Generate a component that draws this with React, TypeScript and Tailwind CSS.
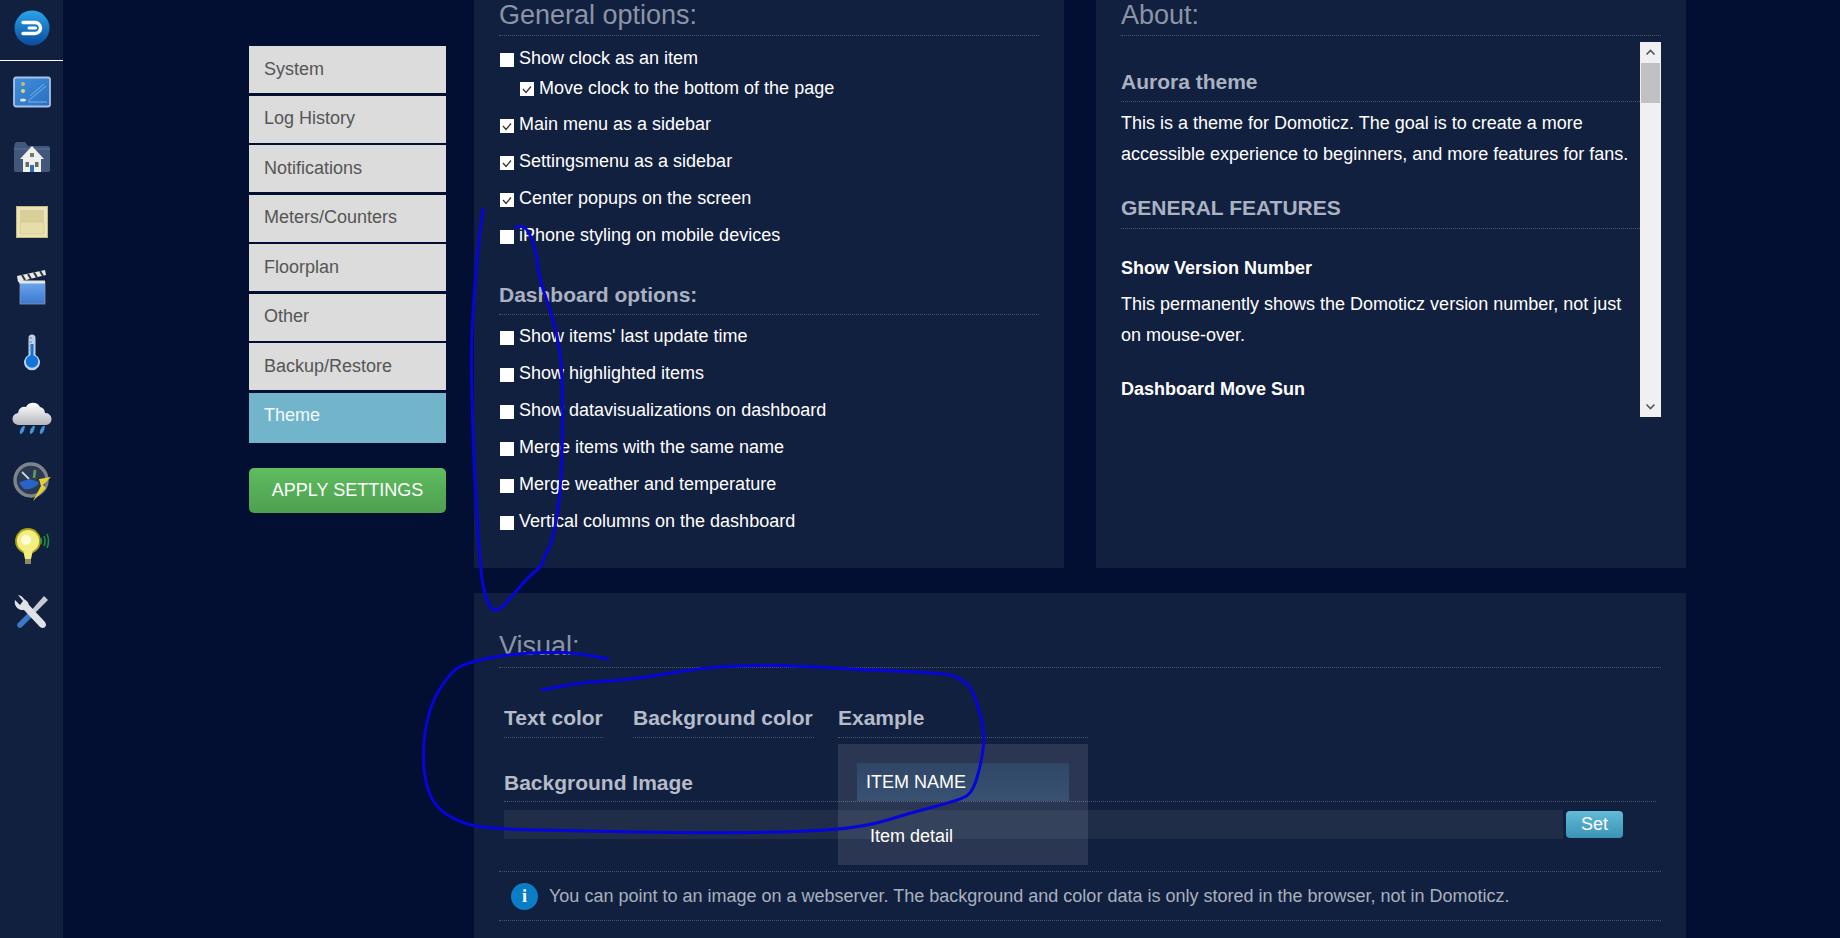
const navItems = ['System', 'Log History', 'Notifications', 'Meters/Counters', 'Floorplan', 'Other', 'Backup/Restore']

const dashboardOptions = [
  "Show items' last update time",
  'Show highlighted items',
  'Show datavisualizations on dashboard',
  'Merge items with the same name',
  'Merge weather and temperature',
  'Vertical columns on the dashboard',
]

// hand drawn marker lines on top of the page, in page pixels
const scribbleOne = [
  [483, 209], [479, 237], [475, 283], [471, 343], [472, 400], [474, 467], [480, 567], [485, 597], [493, 612], [503, 607],
  [528, 577], [541, 567], [545, 555], [552, 543], [560, 500], [563, 433], [562, 367], [557, 333], [548, 303], [539, 278],
  [536, 250], [528, 230], [522, 226], [516, 227],
]
const scribbleTwo = [
  [608, 659], [580, 653], [543, 652], [503, 655], [467, 663], [453, 670], [433, 698], [423, 737], [424, 780], [435, 807],
  [460, 823], [493, 829], [577, 831], [700, 833], [800, 832], [865, 827], [910, 813], [960, 800], [973, 792], [982, 760],
  [985, 730], [973, 690], [963, 680], [947, 673], [867, 670], [800, 666], [750, 665], [700, 668], [630, 680], [583, 682],
  [542, 690],
]

function smooth(points: number[][]) {
  let d = `M${points[0][0]} ${points[0][1]}`
  for (let i = 1; i < points.length - 1; i++) {
    const mx = (points[i][0] + points[i + 1][0]) / 2
    const my = (points[i][1] + points[i + 1][1]) / 2
    d += ` Q${points[i][0]} ${points[i][1]} ${mx} ${my}`
  }
  const last = points[points.length - 1]
  return `${d} L${last[0]} ${last[1]}`
}

function Logo() {
  return (
    <svg width="40" height="40" viewBox="0 0 40 40">
      <defs>
        <linearGradient id="logoFill" x1="0" y1="0" x2="0" y2="1">
          <stop offset="0" stopColor="#2aa5ea" />
          <stop offset="1" stopColor="#0a4a9c" />
        </linearGradient>
      </defs>
      <circle cx="20" cy="20" r="17.5" fill="url(#logoFill)" />
      <path d="M11 14.5 H23 A5.5 5.5 0 0 1 23 25.5 H11" fill="none" stroke="#fff" strokeWidth="3.4" strokeLinecap="round" />
      <path d="M17 20 H23.5" stroke="#fff" strokeWidth="3" strokeLinecap="round" />
    </svg>
  )
}

function DashboardIcon() {
  return (
    <svg width="40" height="40" viewBox="0 0 40 40">
      <defs>
        <linearGradient id="dashFill" x1="0" y1="0" x2="1" y2="1">
          <stop offset="0" stopColor="#3f8fdc" />
          <stop offset="1" stopColor="#2a70c0" />
        </linearGradient>
      </defs>
      <rect x="2" y="5.5" width="36" height="29" rx="2" fill="url(#dashFill)" stroke="#a9c1e6" strokeWidth="1.8" />
      <circle cx="11" cy="12" r="2" fill="#c9b878" />
      <circle cx="11" cy="19" r="2" fill="#ead85e" />
      <ellipse cx="11" cy="28" rx="3" ry="1.6" fill="#dfe8f5" />
      <path d="M16 29 L34 14 M18 24 L32 12 M16 30 H35" stroke="#7ab2ea" strokeWidth="1" />
    </svg>
  )
}

function FolderHouseIcon() {
  return (
    <svg width="40" height="40" viewBox="0 0 40 40">
      <path d="M2 12 Q2 5 5 5 H13 L16 9 H36 Q38 9 38 12 V33 Q38 35 36 35 H4 Q2 35 2 33 Z" fill="#41587c" />
      <path d="M2 12 H38" stroke="#5a7299" strokeWidth="1" />
      <path d="M20 9 L32 22 H29 V35 H11 V22 H8 Z" fill="#eef0ee" />
      <rect x="13.5" y="25" width="3.5" height="5" fill="#6a6a60" />
      <rect x="23" y="25" width="3.5" height="5" fill="#6a6a60" />
      <rect x="18" y="16" width="4" height="4" fill="#77776c" />
      <rect x="18" y="28" width="4" height="7" fill="#2d6fc0" />
    </svg>
  )
}

function FloorplanIcon() {
  return (
    <svg width="40" height="40" viewBox="0 0 40 40">
      <rect x="4.5" y="4.5" width="31" height="31" fill="#ece4b8" stroke="#c2b67c" strokeWidth="1" />
      <rect x="8" y="8" width="24" height="12" fill="#d9cf98" />
      <rect x="8" y="20" width="24" height="12" fill="#e6ddaa" stroke="#cfc48a" strokeWidth="0.6" />
    </svg>
  )
}

function SceneIcon() {
  return (
    <svg width="40" height="40" viewBox="0 0 40 40">
      <defs>
        <linearGradient id="sceneFill" x1="0" y1="0" x2="0" y2="1">
          <stop offset="0" stopColor="#6ba6f2" />
          <stop offset="1" stopColor="#3c78cc" />
        </linearGradient>
      </defs>
      <rect x="8" y="15" width="25" height="22" fill="url(#sceneFill)" stroke="#8a95a6" strokeWidth="0.8" />
      <path d="M5 9 L33 3 L34 8 L6 15 Z" fill="#e8e8e8" />
      <path d="M10 8 L13 13 M16 7 L19 12 M22 5.5 L25 10.5 M28 4 L31 9" stroke="#2c3340" strokeWidth="2" />
      <rect x="7" y="13.5" width="26" height="3" fill="#e4e4e4" />
    </svg>
  )
}

function ThermometerIcon() {
  return (
    <svg width="40" height="40" viewBox="0 0 40 40">
      <path d="M16.5 6 A3.5 3.5 0 0 1 23.5 6 V23 A8 8 0 1 1 16.5 23 Z" fill="#bcd0e8" />
      <circle cx="20" cy="29.5" r="6.2" fill="#1274d8" />
      <rect x="18.5" y="12" width="3" height="16" fill="#1274d8" />
      <path d="M17.5 6 H20 M17.5 10 H20 M17.5 14 H20 M17.5 18 H20" stroke="#6f8098" strokeWidth="1" />
    </svg>
  )
}

function WeatherIcon() {
  return (
    <svg width="40" height="40" viewBox="0 0 40 40">
      <defs>
        <linearGradient id="cloudFill" x1="0" y1="0" x2="0" y2="1">
          <stop offset="0" stopColor="#ffffff" />
          <stop offset="1" stopColor="#b4b8bc" />
        </linearGradient>
      </defs>
      <path d="M7 28 A6 6 0 0 1 6 16 A6.5 6.5 0 0 1 14 10 A8 8 0 0 1 28 10 A6.5 6.5 0 0 1 33 16 A6 6 0 0 1 34 28 Z" fill="url(#cloudFill)" />
      <path d="M11 29 Q7 33 8 37 Q12 37 13 29 Z M21 29 Q17 33 18 37 Q22 37 23 29 Z M31 29 Q27 33 28 37 Q32 37 33 29 Z" fill="#3f94dc" />
    </svg>
  )
}

function UtilityIcon() {
  return (
    <svg width="40" height="40" viewBox="0 0 40 40">
      <circle cx="19" cy="18" r="16" fill="#2b3a52" stroke="#7f848c" strokeWidth="3.4" />
      <path d="M10 10 L17 17" stroke="#cfd3d8" strokeWidth="1.8" />
      <path d="M23 8 L22 16" stroke="#5f9d5a" strokeWidth="2.6" />
      <path d="M7 21 Q18 14 27 21 Q22 28 12 27 Z" fill="#2a63c8" />
      <path d="M39 15 L27 17 L29 24 L21 39 L34 26 L31 23 Z" fill="#e4d030" />
    </svg>
  )
}

function LightIcon() {
  return (
    <svg width="40" height="40" viewBox="0 0 40 40">
      <circle cx="16" cy="14" r="12" fill="#f4ee80" stroke="#a8a210" strokeWidth="1.8" />
      <circle cx="14" cy="13" r="5" fill="#fffbd8" />
      <path d="M11 23 L13 32 H19 L21 23 Z" fill="#f2ec80" />
      <rect x="13" y="32" width="6" height="5" fill="#8f8a5c" />
      <path d="M29 11 Q30 14 29 17 M32 9 Q34 14 32 19 M35 7 Q38 14 35 21" fill="none" stroke="#1f8f35" strokeWidth="1.6" />
    </svg>
  )
}

function ToolsIcon() {
  return (
    <svg width="40" height="40" viewBox="0 0 40 40">
      <path d="M32 4 L36 8 L20 24 L17 21 Z" fill="#c6cbd2" />
      <path d="M19 22 L8 33" stroke="#3d78c4" strokeWidth="5.5" strokeLinecap="round" />
      <path d="M12 7 A8 8 0 0 0 6 3 L11 9 L8 13 L3 8 A8 8 0 0 0 12 18 L28 35 Q31 37 33 35 Q35 33 33 30 L17 13 Q16 9 12 7 Z" fill="#dfe2e6" />
    </svg>
  )
}

const sideIcons = [DashboardIcon, FolderHouseIcon, FloorplanIcon, SceneIcon, ThermometerIcon, WeatherIcon, UtilityIcon, LightIcon, ToolsIcon]

function CheckOption({ label, checked, sub }: { label: string; checked?: boolean; sub?: boolean }) {
  return (
    <label className={`ml-[1px] flex items-center gap-[5px] text-[18px] text-white ${sub ? 'h-[29px] pb-[7px] pl-[20px]' : 'h-[37px]'}`}>
      <span className="mt-[2px] flex h-[14px] w-[14px] shrink-0 items-center justify-center bg-white">
        {checked && (
          <svg width="12" height="12" viewBox="0 0 12 12" fill="none" stroke="#333" strokeWidth="1.3">
            <path d="M2 6 L5 9.5 L10 3.5" />
          </svg>
        )}
      </span>
      {label}
    </label>
  )
}

function Scrollbar() {
  return (
    <div className="flex w-[21px] shrink-0 flex-col bg-[#f0f0f0]">
      <div className="flex h-[21px] items-center justify-center">
        <svg width="11" height="11" viewBox="0 0 11 11" fill="none" stroke="#555" strokeWidth="1.6">
          <path d="M1.5 7.5 L5.5 3.5 L9.5 7.5" />
        </svg>
      </div>
      <div className="mx-px h-[40px] bg-[#c1c1c1]" />
      <div className="flex-1" />
      <div className="flex h-[21px] items-center justify-center">
        <svg width="11" height="11" viewBox="0 0 11 11" fill="none" stroke="#555" strokeWidth="1.6">
          <path d="M1.5 3.5 L5.5 7.5 L9.5 3.5" />
        </svg>
      </div>
    </div>
  )
}

export default function App() {
  return (
    <div className="relative flex h-[938px] w-[1840px] overflow-hidden bg-[#020f33] font-['Liberation_Sans',Arial,sans-serif]">
      {/* Main menu */}
      <div className="flex w-[63px] shrink-0 flex-col items-center bg-[#11203f]">
        <div className="flex h-[61px] w-full items-center justify-center border-b border-white pb-[5px]">
          <Logo />
        </div>
        <div className="-mt-[2px] flex flex-col">
          {sideIcons.map((Icon, i) => (
            <div key={i} className="flex h-[65px] items-center justify-center">
              <Icon />
            </div>
          ))}
        </div>
      </div>

      {/* Settings menu */}
      <div className="ml-[186px] w-[197px] shrink-0 pt-[46px]">
        <div className="flex flex-col gap-[2.5px]">
          {navItems.map((item) => (
            <div key={item} className="flex h-[47px] items-center bg-[#dcdcdc] pb-[1px] pl-[15px] text-[18px] text-[#555]">
              {item}
            </div>
          ))}
          <div className="flex h-[50px] items-center bg-[#72b4ca] pb-[4px] pl-[15px] text-[18px] text-[#f2fbff]">Theme</div>
        </div>
        <button className="mt-[25px] h-[45px] w-full rounded-[5px] bg-gradient-to-b from-[#5fbd5f] to-[#4d9f50] text-[18px] text-white">
          APPLY SETTINGS
        </button>
      </div>

      <div className="ml-[28px] w-[1212px] shrink-0">
        <div className="flex h-[568px] gap-[32px]">
          {/* General options */}
          <section className="w-[590px] bg-[#12203f] px-[25px]">
            <h2 className="h-[36px] border-b border-dotted border-[#4a556c] text-[27px] leading-[30px] text-[#8b94a6]">General options:</h2>
            <div className="mt-[4px]">
              <CheckOption label="Show clock as an item" />
              <CheckOption label="Move clock to the bottom of the page" checked sub />
              <CheckOption label="Main menu as a sidebar" checked />
              <CheckOption label="Settingsmenu as a sidebar" checked />
              <CheckOption label="Center popups on the screen" checked />
              <CheckOption label="iPhone styling on mobile devices" />
            </div>
            <h3 className="mb-[3px] flex h-[61px] items-end border-b border-dotted border-[#4a556c] pb-[4px] text-[21px] font-bold text-[#aab2c2]">
              Dashboard options:
            </h3>
            {dashboardOptions.map((label) => (
              <CheckOption key={label} label={label} />
            ))}
          </section>

          {/* About */}
          <section className="w-[590px] bg-[#12203f] px-[25px]">
            <h2 className="h-[36px] border-b border-dotted border-[#4a556c] text-[27px] leading-[30px] text-[#8b94a6]">About:</h2>
            <div className="mt-[6px] flex h-[375px]">
              <div className="min-w-0 flex-1 overflow-hidden text-[18px] leading-[31px] text-white">
                <h3 className="flex h-[60px] items-end border-b border-dotted border-[#4a556c] pb-[4px] text-[21px] font-bold text-[#aab2c2]">Aurora theme</h3>
                <p className="mt-[6px]">
                  This is a theme for Domoticz. The goal is to create a more accessible experience to beginners, and more features for fans.
                </p>
                <h3 className="flex h-[59px] items-end border-b border-dotted border-[#4a556c] pb-[5px] text-[21px] font-bold text-[#aab2c2]">GENERAL FEATURES</h3>
                <h4 className="mt-[24px] font-bold">Show Version Number</h4>
                <p className="mt-[5px]">This permanently shows the Domoticz version number, not just on mouse-over.</p>
                <h4 className="mt-[23px] font-bold">Dashboard Move Sun</h4>
              </div>
              <Scrollbar />
            </div>
          </section>
        </div>

        {/* Visual */}
        <section className="relative mt-[25px] h-[400px] bg-[#12203f] px-[25px]">
          <h2 className="flex h-[75px] items-end border-b border-dotted border-[#4a556c] pb-[6px] text-[27px] leading-[30px] text-[#8b94a6]">Visual:</h2>
          <div className="flex gap-[30px] pl-[5px] pt-[32px] text-[21px] font-bold text-[#b4bbc9]">
            <div className="flex h-[38px] w-[99px] items-end border-b border-dotted border-[#4a556c] pb-[4px]">Text color</div>
            <div className="-mr-[6px] flex h-[38px] w-[181px] items-end border-b border-dotted border-[#4a556c] pb-[4px]">Background color</div>
            <div className="flex h-[38px] w-[250px] items-end border-b border-dotted border-[#4a556c] pb-[4px]">Example</div>
          </div>
          <div className="mx-[5px] mt-[26px] flex h-[38px] items-end border-b border-dotted border-[#4a556c] pb-[3px] text-[21px] font-bold text-[#b4bbc9]">Background Image</div>
          <div className="ml-[5px] mt-[8px] flex h-[29px] items-center">
            <div className="h-[29px] w-[1059px] bg-[#1f2d49]" />
            <button className="ml-[3px] h-[27px] w-[57px] rounded-[4px] bg-gradient-to-b from-[#62bbd8] to-[#3a92b6] text-[18px] text-white">Set</button>
          </div>
          <div className="mt-[32px] flex h-[50px] items-center border-y border-dotted border-[#4a556c] pl-[12px]">
            <span className="flex h-[27px] w-[27px] items-center justify-center rounded-full bg-[#0b7dc5] font-['Liberation_Serif',serif] text-[18px] font-bold text-white">i</span>
            <span className="ml-[11px] text-[18px] text-[#a9b0bf]">
              You can point to an image on a webserver. The background and color data is only stored in the browser, not in Domoticz.
            </span>
          </div>

          {/* Example sits over the input row */}
          <div className="absolute left-[364px] top-[151px] h-[121px] w-[250px] bg-white/10">
            <div className="ml-[19px] mt-[19px] flex h-[38px] w-[212px] items-center bg-gradient-to-b from-[#2f4666] to-[#3a5272] pl-[9px] text-[18px] text-white">ITEM NAME</div>
            <div className="ml-[32px] mt-[24px] text-[18px] leading-[22px] text-white">Item detail</div>
          </div>
        </section>
      </div>

      {/* Marker annotations */}
      <svg className="pointer-events-none absolute left-0 top-0" width="1840" height="938" fill="none" stroke="#0505dc" strokeWidth="3" strokeLinecap="round" strokeLinejoin="round">
        <path d={smooth(scribbleOne)} />
        <path d={smooth(scribbleTwo)} />
      </svg>
    </div>
  )
}
